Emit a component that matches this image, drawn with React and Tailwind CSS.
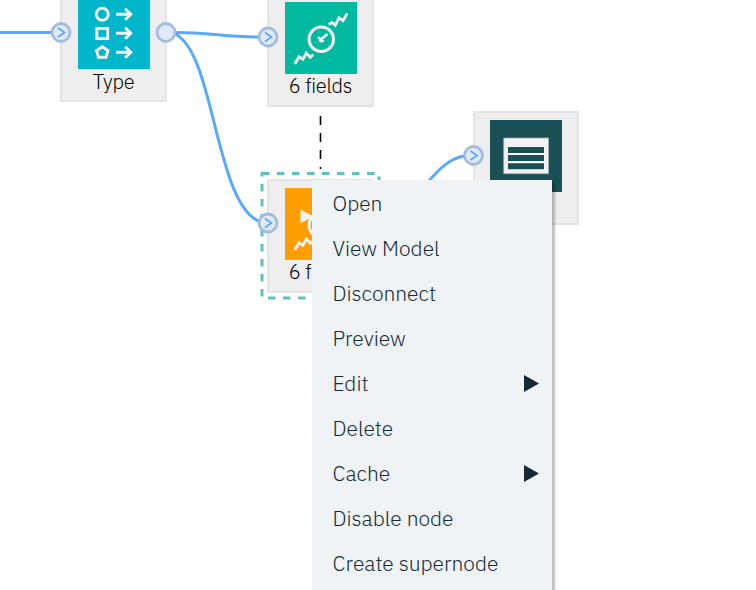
const nodes = [
  { id: 'type', x: 60, y: -12, width: 'w-[107px]', label: 'Type', color: 'bg-[#00b6cb]', icon: 'type', line: 'leading-[26px]' },
  { id: 'auto', x: 267, y: -7, width: 'w-[107px]', label: '6 fields', color: 'bg-[#00b9a0]', icon: 'numeric', line: 'leading-6' },
  { id: 'model', x: 267, y: 179, width: 'w-[107px]', label: '6 fields', color: 'bg-[#ff9e00]', icon: 'model', line: 'leading-6' },
  { id: 'table', x: 473, y: 111, width: 'w-[106px]', label: '', color: 'bg-[#1a4f55]', icon: 'table', line: 'leading-6' },
];

const menuItems = [
  { label: 'Open' },
  { label: 'View Model' },
  { label: 'Disconnect' },
  { label: 'Preview' },
  { label: 'Edit', submenu: true },
  { label: 'Delete' },
  { label: 'Cache', submenu: true },
  { label: 'Disable node' },
  { label: 'Create supernode' },
];

function Gauge() {
  return (
    <g fill="none" stroke="#f4f4f4">
      <circle cx="36.3" cy="37.3" r="12.2" strokeWidth="3" />
      <path d="M9.8 62 L14 54.8 L18 57.2 L21.3 51 L25.3 55.2 L28.2 52.5" strokeWidth="2.8" />
      <path d="M43.8 22.5 L47 20.5 L50.3 23.2 L54 15.8 L58 18.7 L62.2 11.5" strokeWidth="2.8" />
      <path d="M36 37.5 L42.5 32 M33 35.3 L38.7 39.7 M34.8 40 L37.5 35.5" strokeWidth="2.5" />
    </g>
  );
}

function NodeIcon({ kind }) {
  return (
    <svg className="block h-[72px] w-[72px]" viewBox="0 0 72 72">
      {kind === 'type' && (
        <g fill="none" stroke="#f2f4f4" strokeWidth="2.9">
          <circle cx="24.3" cy="17.2" r="6" />
          <rect x="18.9" y="31.4" width="10.8" height="10.2" />
          <path d="M24.3 49.7 L30 53.7 L28 60.2 H20.5 L18.5 53.7 Z" />
          <path d="M38 17.2 H53 M47.2 11.7 L52.8 17.2 L47.2 22.7" />
          <path d="M38 36.2 H53 M47.2 30.7 L52.8 36.2 L47.2 41.7" />
          <path d="M38 55.3 H53 M47.2 49.8 L52.8 55.3 L47.2 60.8" />
        </g>
      )}
      {kind === 'numeric' && <Gauge />}
      {kind === 'model' && (
        <>
          <Gauge />
          <path d="M15.5 21.5 L28.5 28.5 L15.5 35.3 Z" fill="#f4f4f4" />
        </>
      )}
      {kind === 'table' && (
        <>
          <path d="M13.7 18 H58.5 V53.7 H13.7 Z" fill="#f3f3f3" stroke="#9bb3b5" strokeWidth="0.7" />
          <path d="M18 27 H54 V33 H18 Z M18 35 H54 V41 H18 Z M18 43.3 H54 V49.3 H18 Z" fill="#1a4f55" />
        </>
      )}
    </svg>
  );
}

function FlowNode({ node }) {
  return (
    <div
      className={`absolute flex h-[114px] flex-col items-center border-2 border-[#e1e5e8] bg-[#eeeeee] pt-[7px] ${node.width}`}
      style={{ left: node.x, top: node.y }}
    >
      <div className={`h-[72px] w-[72px] shrink-0 ${node.color}`}>
        <NodeIcon kind={node.icon} />
      </div>
      <div className={`text-[20px] font-light tracking-[-0.2px] whitespace-nowrap text-black ${node.line}`}>{node.label}</div>
    </div>
  );
}

function Port({ x, y, output }) {
  return (
    <g>
      <circle cx={x} cy={y} r="9" fill="#e0e9f6" stroke="#a4bce0" strokeWidth="2.8" />
      {!output && (
        <path d={`M${x - 3} ${y - 4.5} L${x + 3.5} ${y} L${x - 3} ${y + 4.5}`} fill="none" stroke="#56a8fa" strokeWidth="1.7" />
      )}
    </g>
  );
}

export default function App() {
  return (
    <div className="relative h-[590px] w-[756px] overflow-hidden bg-white font-['IBM_Plex_Sans',Roboto,sans-serif]">
      {nodes.map((node) => (
        <FlowNode key={node.id} node={node} />
      ))}

      <svg className="absolute inset-0 h-[590px] w-[756px]" viewBox="0 0 756 590" fill="none">
        <g stroke="#5aaafa" strokeWidth="3">
          <path d="M0 32.5 H52" />
          <path d="M175 32.5 C210 32.5 225 37 259 37" />
          <path d="M175 34 C215 52 215 207 261 222" />
          <path d="M428 182 C439 169 450 158 465 156" />
        </g>
        <path d="M320.5 116 V169" stroke="#000" strokeWidth="1.6" strokeDasharray="9 8" />
        <path d="M262 173.5 H379 V298 H262 Z" stroke="#5cc3b8" strokeWidth="3" strokeDasharray="7.5 7.5" />
        <Port x={61} y={32.5} />
        <Port x={166} y={32.5} output />
        <Port x={268} y={37} />
        <Port x={268} y={223} />
        <Port x={473.5} y={155.5} />
      </svg>

      <ul className="absolute top-[180px] left-[312px] flex w-[240px] flex-col bg-[#eff3f6] pt-px pb-10 text-[#152934] shadow-[3px_2px_2px_rgba(0,0,0,0.25)]">
        {menuItems.map((item) => (
          <li key={item.label} className="flex h-[45px] items-center justify-between pr-[13px] pb-px pl-[20.5px]">
            <span className="text-[21px] leading-6 font-light whitespace-nowrap">{item.label}</span>
            {item.submenu && (
              <svg className="mt-px h-[17px] w-[15px]" viewBox="0 0 15 17">
                <path d="M0 0 L15 8.5 L0 17 Z" fill="#152934" />
              </svg>
            )}
          </li>
        ))}
      </ul>
    </div>
  );
}
